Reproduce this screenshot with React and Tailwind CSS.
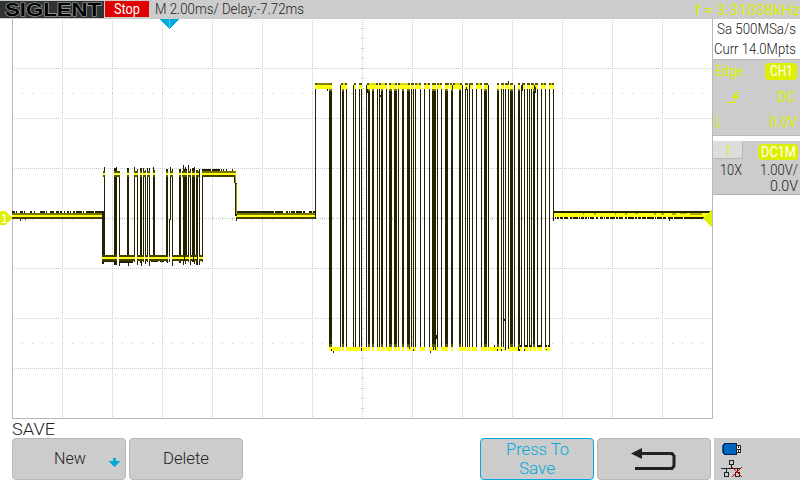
import React from "react";

const INK = "#222200";
const OLIVE = "#777700";
const YELLOW = "#ffff14";

// Vertical edges of the first burst: [x, width, top, bottom]
const smallEdges = [
  [102, 2, 211, 264], [104, 1, 167, 262], [114, 3, 168, 265], [116, 1, 167, 262], [119, 1, 171, 266],
  [127, 2, 168, 262], [128, 1, 172, 266], [134, 1, 167, 262], [137, 1, 169, 265], [140, 2, 168, 263],
  [141, 1, 175, 266], [143, 1, 168, 262], [145, 1, 170, 264], [147, 1, 168, 262], [149, 1, 168, 266],
  [153, 2, 170, 262], [153, 1, 167, 258], [166, 2, 169, 262], [167, 1, 173, 263], [169, 1, 219, 262],
  [170, 1, 167, 220], [172, 1, 169, 266], [179, 2, 169, 263], [183, 4, 169, 261], [183, 1, 165, 265],
  [185, 1, 167, 264], [188, 1, 165, 262], [190, 1, 169, 265], [192, 3, 168, 262], [194, 1, 167, 264],
  [196, 2, 170, 265], [199, 1, 169, 265], [202, 1, 169, 262],
];
const smallHigh = [
  [103, 105], [114, 120], [127, 129], [134, 138], [140, 142], [143, 146], [147, 150], [153, 155],
  [166, 168], [170, 173], [179, 181], [182, 187], [188, 191], [192, 195], [196, 199], [202, 203],
];
const smallLow = [
  [102, 117], [119, 135], [137, 141], [141, 144], [145, 148], [149, 168], [169, 170], [172, 184],
  [185, 189], [190, 193], [194, 197], [199, 203],
];

// Edges of the second burst: [x, width]
const bigEdges = [
  [329, 3], [340, 1], [342, 2], [346, 1], [353, 1], [355, 1], [359, 1], [361, 1], [366, 1], [368, 2],
  [372, 2], [377, 1], [379, 1], [381, 2], [386, 1], [389, 3], [394, 3], [398, 1], [402, 2], [407, 3],
  [411, 1], [413, 1], [415, 1], [420, 1], [424, 1], [429, 1], [432, 4], [437, 1], [441, 1], [445, 3],
  [451, 2], [459, 2], [462, 1], [465, 1], [467, 1], [469, 1], [472, 1], [476, 1], [481, 1], [484, 3],
  [488, 1], [497, 2], [501, 1], [503, 1], [505, 1], [508, 1], [510, 3], [514, 1], [518, 2], [521, 1],
  [524, 1], [527, 1], [529, 1], [531, 1], [533, 2], [537, 1], [541, 1], [545, 1], [549, 1],
];
const bigHigh = [
  [315, 332], [341, 347], [354, 356], [359, 362], [367, 378], [379, 387], [389, 397], [398, 410],
  [411, 414], [415, 421], [424, 430], [432, 436], [437, 442], [445, 449], [450, 452], [453, 462],
  [465, 468], [469, 473], [476, 482], [484, 488], [497, 499], [501, 504], [505, 509], [510, 513],
  [518, 520], [522, 525], [527, 530], [531, 534], [535, 538], [541, 546], [549, 554],
];
const bigLow = [
  [329, 341], [342, 344], [346, 360], [361, 367], [368, 370], [372, 374], [377, 380], [381, 385],
  [386, 392], [394, 397], [398, 400], [402, 404], [407, 412], [413, 416], [420, 425], [429, 433],
  [434, 435], [436, 438], [441, 448], [451, 453], [459, 466], [467, 471], [472, 477], [481, 487],
  [488, 502], [503, 505], [508, 518], [519, 522], [524, 528], [529, 532], [533, 536], [537, 542],
  [545, 550],
];

// Noise fringe drawn over the flat parts: [x, width]
const fringe = [
  [12, 3], [16, 1], [20, 3], [24, 1], [30, 2], [34, 1], [40, 5], [46, 1], [50, 4], [56, 3], [60, 2],
  [64, 1], [67, 2], [70, 1], [73, 2], [76, 6], [83, 1], [86, 8], [95, 8], [236, 38], [275, 8],
  [286, 2], [289, 1], [291, 4], [296, 6], [303, 2], [309, 3], [313, 3],
  [555, 1], [557, 2], [560, 3], [564, 4], [570, 2], [573, 5], [579, 1], [581, 3], [585, 2], [588, 1],
  [590, 4], [596, 2], [600, 3], [604, 1], [606, 3], [610, 5], [616, 2], [619, 4], [625, 2], [628, 6],
  [635, 2], [638, 3], [642, 4], [647, 7], [655, 1], [657, 5], [663, 3], [668, 5], [674, 9], [684, 20],
];

function Grid() {
  return (
    <g stroke="#cccccc" strokeWidth="1">
      {Array.from({ length: 13 }, (_, i) => (
        <line key={i} x1={62.5 + i * 50} x2={62.5 + i * 50} y1="20" y2="418" strokeDasharray="1 1" />
      ))}
      {Array.from({ length: 7 }, (_, i) => (
        <line key={i} x1="14" x2="712" y1={68.5 + i * 50} y2={68.5 + i * 50} strokeDasharray="1 1" />
      ))}
      {Array.from({ length: 69 }, (_, i) => (
        <g key={i}>
          <line x1={22.5 + i * 10} x2={22.5 + i * 10} y1="217" y2="220" />
          <line x1={22 + i * 10} x2={23 + i * 10} y1="93.5" y2="93.5" />
          <line x1={22 + i * 10} x2={23 + i * 10} y1="343.5" y2="343.5" />
        </g>
      ))}
      {Array.from({ length: 39 }, (_, i) => (
        <line key={i} x1="361" x2="364" y1={28.5 + i * 10} y2={28.5 + i * 10} />
      ))}
    </g>
  );
}

function Flat({ x, w, y }) {
  return (
    <g>
      <rect x={x} y={y - 2} width={w} height="2" fill={OLIVE} />
      <rect x={x} y={y} width={w} height="2" fill={YELLOW} />
      <rect x={x} y={y + 2} width={w} height="2" fill="#444400" />
    </g>
  );
}

function Waveform() {
  return (
    <g>
      {fringe.map(([x, w]) => (
        <rect key={x} x={x} y={x > 550 ? 217 : 211} width={w} height="2" fill={INK} />
      ))}
      <path d="M20 219h1v2h-1zM25 219h1v1h-1zM236 219h1v2h-1zM669 219h1v2h-1z" fill={INK} />
      <Flat x={12} w={91} y={215} />
      <Flat x={236} w={80} y={215} />
      <rect x="553" y="211" width="159" height="2" fill="#222800" />
      <rect x="553" y="213" width="155" height="4" fill={YELLOW} />
      <path d="M583 213h1v2h-1zM594 213h2v2h-2zM615 213h1v2h-1zM625 213h2v2h-2zM635 213h3v1h-3zM654 213h2v2h-2zM661 213h3v2h-3zM672 213h4v2h-4zM680 213h7v1h-7zM690 213h12v2h-12z" fill="#b0b000" />

      {smallEdges.map(([x, w, a, b], i) => (
        <rect key={i} x={x} y={a} width={w} height={b - a} fill={INK} />
      ))}
      {smallHigh.map(([a, b]) => (
        <g key={a}>
          <rect x={a} y="171" width={b - a} height="6" fill="#555500" />
          <rect x={a} y="173" width={b - a} height="2" fill={YELLOW} />
        </g>
      ))}
      {smallLow.map(([a, b]) => (
        <g key={a}>
          <rect x={a} y="255" width={b - a} height="6" fill="#444400" />
          <rect x={a} y="257" width={b - a} height="2" fill={YELLOW} />
        </g>
      ))}
      <path d="M105 261h9v1h-9zM120 261h13v2h-13zM151 261h7v1h-7zM160 261h4v1h-4z" fill={INK} />
      <path d="M203 169h8v2h-8zM212 169h8v2h-8zM221 169h1v2h-1zM223 169h1v2h-1zM226 169h1v2h-1zM232 169h1v2h-1zM234 175h2v8h-2zM235 183h2v33h-2z" fill={INK} />
      <Flat x={202} w={34} y={173} />
      <rect x="235" y="175" width="1" height="8" fill="#a0a000" />
      <rect x="236" y="184" width="1" height="30" fill="#a0a000" />

      <rect x="315" y="84" width="1" height="135" fill={INK} />
      <rect x="553" y="84" width="1" height="137" fill={INK} />
      {bigEdges.map(([x, w]) => (
        <g key={x}>
          <rect x={x} y="85" width={w} height="265" fill={INK} />
          {w > 1 && <rect x={x} y="89" width={w} height="2" fill={OLIVE} />}
          {w > 1 && <rect x={x} y="344" width={w} height="3" fill="#555500" />}
        </g>
      ))}
      {bigHigh.map(([a, b]) => (
        <g key={a}>
          <rect x={a} y="83" width={b - a} height="2" fill="#555500" />
          {b - a > 4 && <rect x={a + 2} y="83" width={b - a - 4} height="2" fill="#d8d810" />}
          <rect x={a} y="85" width={b - a} height="4" fill={YELLOW} />
        </g>
      ))}
      <rect x="317" y="83" width="14" height="2" fill="#888800" />
      {bigLow.map(([a, b]) => (
        <rect key={a} x={a} y="347" width={b - a} height="4" fill={YELLOW} />
      ))}
      <path d="M327 89h1v2h-1zM379 95h2v2h-2zM367 89h1v4h-1zM340 85h1v5h-1zM353 85h1v5h-1zM366 87h1v4h-1zM452 85h1v4h-1zM466 87h1v3h-1zM469 85h1v5h-1zM508 81h1v2h-1zM522 85h1v6h-1zM535 87h1v6h-1z" fill={INK} />
      <path d="M331 349h1v2h-1zM333 351h1v2h-1zM361 348h1v3h-1zM409 347h1v2h-1zM413 349h1v2h-1zM430 351h1v2h-1zM435 335h2v4h-2zM494 345h1v2h-1zM504 319h2v2h-2zM497 349h1v2h-1zM501 349h1v2h-1zM508 345h1v4h-1zM520 345h2v2h-2zM518 349h2v2h-2zM525 345h2v2h-2zM530 345h1v2h-1zM524 349h1v2h-1zM538 345h4v2h-4zM546 345h1v2h-1zM548 345h2v2h-2zM546 349h1v1h-1z" fill={INK} />
    </g>
  );
}

function Scope() {
  return (
    <svg className="block h-[400px] w-[713px]" viewBox="0 19 713 400" shapeRendering="crispEdges">
      <Grid />
      <path d="M12.5 19V418.5H712.5V19" fill="none" stroke="#b8b8b8" />
      <Waveform />
      <path d="M160 19H179L169.500 29Z" fill="#00aadd" />
      <path d="M169.500 19V28" stroke="#55ccee" />
      <path d="M0 211H6L12 218L6 225H0Z" fill="#dcf000" />
      <text x="1" y="223" fontSize="12" fill="#fff" fontFamily="Liberation Sans, sans-serif">1</text>
      <path d="M712 210V227L703 218.500Z" fill="#dcf000" />
    </svg>
  );
}

// One line of text fitted to a fixed width
function Label({ children, w, size = 14, color = "#222", weight = 300, className = "" }) {
  return (
    <svg className={"block shrink-0 overflow-visible " + className} width={w} height="17">
      <text x="0" y="13" fontSize={size} fontWeight={weight} fill={color} textLength={w} lengthAdjust="spacingAndGlyphs" fontFamily="Roboto, Liberation Sans, Arial, sans-serif">
        {children}
      </text>
    </svg>
  );
}

const key = "flex h-[42px] w-[114px] shrink-0 items-center justify-center rounded-[4px] border bg-[#cccccc]";

export default function App() {
  return (
    <div className="flex h-[480px] w-[800px] flex-col overflow-hidden bg-white font-['Liberation_Sans',Arial,sans-serif] text-[#222]">
      <header className="flex h-[19px] shrink-0 items-start bg-[#cccccc]">
        <div className="mt-px h-[17px] w-[104px] bg-[#303333]">
          <svg className="block overflow-visible" width="104" height="17">
            <text x="5" y="14.500" fontSize="18" fontWeight="bold" fill="#000" stroke="#a4a8a8" strokeWidth="1.200" paintOrder="stroke" textLength="96" lengthAdjust="spacingAndGlyphs" fontFamily="Liberation Sans, Arial, sans-serif">SIGLENT</text>
          </svg>
        </div>
        <div className="ml-px mt-px flex h-4 w-11 justify-center bg-[#e00000]">
          <Label w={26} color="#fff" weight={400}>Stop</Label>
        </div>
        <Label w={149} className="ml-1.5 mt-px">M 2.00ms/ Delay:-7.72ms</Label>
        <Label w={105} size={15} color="#dcf000" weight={400} className="ml-auto mt-0.5">f = 3.31038kHz</Label>
      </header>

      <main className="flex h-[400px] shrink-0">
        <Scope />
        <aside className="flex w-[87px] flex-col">
          <div className="flex h-10 shrink-0 flex-col items-end gap-[3px] pr-1 pt-0.5">
            <Label w={79}>Sa 500MSa/s</Label>
            <Label w={82}>Curr 14.0Mpts</Label>
          </div>
          <section className="flex h-[77px] flex-col border-b border-t border-[#b8b8b8] bg-[#cccccc] pl-0.5 pr-[3px]">
            <div className="mt-[3px] flex h-[17px] items-center justify-between">
              <Label w={28} size={15} color="#dcf000" weight={400}>Edge</Label>
              <div className="flex h-[17px] w-8 justify-center rounded-[4px] bg-[#dcf000]">
                <Label w={23} color="#fff" weight={400}>CH1</Label>
              </div>
            </div>
            <div className="mt-[9px] flex h-4 items-center justify-between pl-3">
              <svg width="13" height="13" className="block" fill="none" stroke="#dcf000" shapeRendering="crispEdges">
                <path d="M0 11.500H8.500V1.500H13" />
                <path d="M8.500 2L12 7H5Z" fill="#dcf000" stroke="none" />
              </svg>
              <Label w={18} color="#dcf000" weight={400} className="mr-0.5">DC</Label>
            </div>
            <div className="mt-[9px] flex justify-between">
              <Label w={6} color="#dcf000" weight={400}>L</Label>
              <Label w={28} color="#dcf000" weight={400}>0.0V</Label>
            </div>
          </section>
          <section className="mt-[5px] h-[54px] border-b border-[#b0b0b0] bg-[#cccccc]">
            <div className="flex h-[19px] justify-between pr-0.5">
              <div className="flex h-[18px] w-[30px] justify-center rounded-br-[3px] border-b border-r border-[#b8b8b8] bg-[#dddddd]">
                <Label w={6} color="#dcf000" weight={400} className="mt-0.5">1</Label>
              </div>
              <div className="mt-[3px] flex h-4 w-10 justify-center rounded-[4px] bg-[#dcf000]">
                <Label w={35} color="#fff" weight={400}>DC1M</Label>
              </div>
            </div>
            <div className="mt-0.5 flex h-4 justify-between pl-[7px] pr-0.5">
              <Label w={22}>10X</Label>
              <Label w={38}>1.00V/</Label>
            </div>
            <Label w={28} className="ml-auto mr-0.5">0.0V</Label>
          </section>
        </aside>
      </main>

      <footer className="flex h-[61px] shrink-0 flex-col">
        <div className="h-[19px] pl-3 pt-[3px]">
          <Label w={43} size={17}>SAVE</Label>
        </div>
        <div className="flex gap-[3px] pl-3">
          <button className={key + " justify-start border-[#b8b8b8]"}>
            <Label w={32} size={17} className="ml-[41px]">New</Label>
            <svg className="ml-[23px] mt-1.5 shrink-0" width="12" height="9" shapeRendering="crispEdges">
              <path d="M4 0H7V3H11V4L5.500 9L0 4V3H4Z" fill="#00aadd" />
            </svg>
            <span className="w-1 shrink-0" />
          </button>
          <button className={key + " border-[#b8b8b8]"}>
            <Label w={46} size={17}>Delete</Label>
          </button>
          <button className={key + " ml-[234px] flex-col gap-0.5 border-[#00aadd]"}>
            <Label w={63} size={17} color="#00aadd" className="mt-0.5">Press To</Label>
            <Label w={36} size={17} color="#00aadd">Save</Label>
          </button>
          <button className={key + " border-[#b8b8b8]"}>
            <svg width="46" height="22" className="block" fill="none">
              <path d="M8 5.500H41L43 8V18L41 20.500H4" stroke="#222" strokeWidth="3" />
              <path d="M0 5.500L11 0V11Z" fill="#222" />
            </svg>
          </button>
          <div className="h-[42px] w-[86px] bg-[#cccccc]">
            <svg width="86" height="42" viewBox="714 438 86 42" className="block" shapeRendering="crispEdges" fill="none">
              <path d="M724 443H736V455H724L722 453V445Z" fill="#0066bb" />
              <path d="M736 443.500H725L723.500 445V453L725 454.500H736Z" stroke="#002255" />
              <path d="M736.500 445.500H740.500V452.500H736.500Z" fill="#fff" stroke="#222" />
              <path d="M736 449H741M738 446V448M738 450V452" stroke="#222" />
              <path d="M729.500 460.500H733.500V464.500H729.500ZM731.500 465V468.500M721 468.500H741M726.500 469V472M737.500 469V472M724.500 472.500H728.500V476.500H724.500ZM735.500 472.500H739.500V476.500H735.500Z" stroke="#222" />
              <path d="M732 467L742 477M742 467L732 477" stroke="#dd0000" />
            </svg>
          </div>
        </div>
      </footer>
    </div>
  );
}
